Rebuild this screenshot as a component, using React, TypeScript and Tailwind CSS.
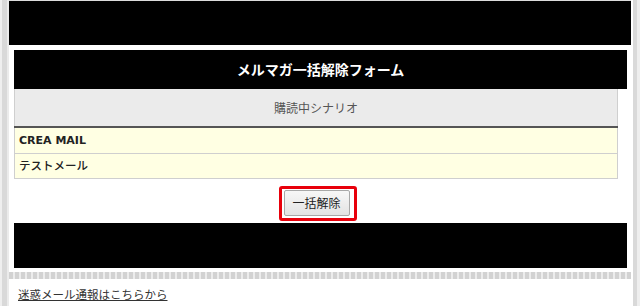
import React from "react";

const jp = "font-['DejaVu_Sans','Noto_Sans_CJK_JP',sans-serif]";

export default function App() {
  return (
    <div className={`flex w-[640px] h-[306px] overflow-hidden bg-white ${jp}`}>
      {/* left rail */}
      <div className="w-[9px] shrink-0 bg-[linear-gradient(90deg,#efefef_0_2px,#d9d9d9_2px_7px,#ebebeb_7px)]" />

      <main className="flex-1 min-w-0">
        <div className="h-[45px] bg-black border-t border-[#dcdcdc]" />

        <div className="pl-[5px] pr-[4px]">
          <h1 className="mt-[5px] h-[39px] bg-black text-white font-bold text-[14px] flex items-center justify-center font-['Noto_Sans_CJK_JP',sans-serif]">
            メルマガ一括解除フォーム
          </h1>

          <table className="w-[604px] border-collapse text-[12px]">
            <thead>
              <tr>
                <th className="h-[38px] p-0 bg-[#ebebeb] border-x border-[#cfcfcf] border-b-2 border-b-[#555] font-normal text-[#555] font-['Noto_Sans_CJK_JP',sans-serif]">
                  購読中シナリオ
                </th>
              </tr>
            </thead>
            <tbody className="text-[#222]">
              <tr>
                <td className="h-[26px] p-0 bg-[#ffffe3] border border-t-0 border-[#cfcfcf] pl-[4px] font-bold text-[11px] leading-none">
                  CREA MAIL
                </td>
              </tr>
              <tr>
                <td className="h-[25px] p-0 bg-[#ffffe3] border border-[#cfcfcf] pl-[4px] font-['Noto_Sans_CJK_JP',sans-serif] font-medium text-[11.5px] leading-none">
                  テストメール
                </td>
              </tr>
            </tbody>
          </table>

          <div className="flex justify-center mt-[7px] pr-[6px]">
            <div className="border-[3px] border-[#e8000b] rounded-[3px] pl-[2px] pr-[4px] pt-[1px] pb-[2px]">
              <button className="block h-[26px] w-[66px] border border-[#a8a8a8] rounded-[2px] bg-[linear-gradient(#f7f7f7,#e3e3e3)] text-[12px] leading-none text-[#222] font-['Noto_Sans_CJK_JP',sans-serif]">
                一括解除
              </button>
            </div>
          </div>

          <div className="mt-[2px] h-[45px] bg-black" />
        </div>

        <div className="mt-[4px] h-[7px] bg-[repeating-linear-gradient(90deg,#d2d2d2_0_4px,#ececec_4px_6px)]" />

        <div className="pl-[9px] pt-[6px] leading-[18px]">
          <a href="#" className="text-[11.5px] text-[#333] underline font-['Noto_Sans_CJK_JP',sans-serif]">
            迷惑メール通報はこちらから
          </a>
        </div>
      </main>

      {/* right rail */}
      <div className="w-[9px] shrink-0 bg-[linear-gradient(90deg,#ffffff_0_2px,#d9d9d9_2px_6px,#eeeeee_6px)]" />
    </div>
  );
}
